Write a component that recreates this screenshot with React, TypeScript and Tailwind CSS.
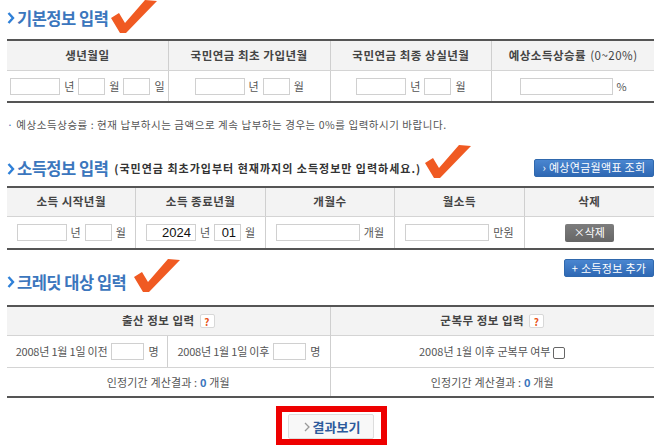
import React from "react";

const Field: React.FC<{ w: string; value?: string }> = ({ w, value }) => (
  <input
    readOnly
    value={value ?? ""}
    className={`${w} h-[17px] border border-[#d0d0d0] bg-white px-1 text-right text-[13px] text-[#111] outline-none font-['Liberation_Sans',sans-serif]`}
  />
);

const Check: React.FC<{ className: string }> = ({ className }) => (
  <svg className={`absolute ${className}`} width="47" height="34" viewBox="0 0 47 34">
    <path d="M0 18 L8 13 L14 23 L34 0 L46 1 L15 33 L9 33 Z" fill="#f05a22" />
  </svg>
);

const Title: React.FC<{ children: React.ReactNode }> = ({ children }) => (
  <div className="flex items-center gap-[2px] text-[16.5px] font-bold leading-none tracking-[-0.5px] text-[#3b76bd]">
    <svg width="8" height="12" viewBox="0 0 8 12">
      <path d="M1.5 1 L6 6 L1.5 11" fill="none" stroke="#2f80d8" strokeWidth="2.4" />
    </svg>
    {children}
  </div>
);

const Th: React.FC<{ children: React.ReactNode; last?: boolean }> = ({ children, last }) => (
  <div className={`flex items-center justify-center bg-[#f3f3f3] text-[11.5px] font-bold tracking-[0.5px] text-[#444] ${last ? "" : "border-r border-[#cfcfcf]"}`}>
    {children}
  </div>
);

const Td: React.FC<{ children: React.ReactNode; last?: boolean }> = ({ children, last }) => (
  <div className={`flex items-center justify-center gap-[4px] text-[11px] text-[#555] ${last ? "" : "border-r border-[#cfcfcf]"}`}>
    {children}
  </div>
);

const BlueButton: React.FC<{ children: React.ReactNode; w: string }> = ({ children, w }) => (
  <div className={`${w} flex h-[18px] items-center justify-center rounded-[2px] border border-[#2f68ad] bg-linear-to-b from-[#4a86d0] to-[#2e68b4] text-[11px] tracking-[0.3px] text-white`}>
    {children}
  </div>
);

const Help = () => (
  <span className="ml-[5px] flex h-[14px] w-[15px] items-center justify-center rounded-[2px] border border-[#d8d8d8] bg-white text-[10px] font-bold text-[#e8541a]">
    ?
  </span>
);

const Result = () => (
  <div className="flex h-[28px] items-center justify-center text-[11px] tracking-[0.15px] text-[#555]">
    인정기간 계산결과 :&nbsp;<b className="text-[#3b76bd]">0</b>&nbsp;개월
  </div>
);

export default function App() {
  return (
    <div className="relative h-[448px] w-[663px] overflow-hidden bg-white pl-[7px] pr-[9px] font-['Noto_Sans_CJK_KR','Liberation_Sans',sans-serif]">
      <div className="flex h-[39px] items-center pb-[3px]">
        <Title>기본정보 입력</Title>
      </div>
      <Check className="left-[111px] top-0" />

      <div className="border-y-2 border-y-[#555]">
        <div className="grid h-[30px] grid-cols-4 border-b border-[#d4d4d4]">
          <Th>생년월일</Th>
          <Th>국민연금 최초 가입년월</Th>
          <Th>국민연금 최종 상실년월</Th>
          <Th last>
            예상소득상승률<span className="ml-1 font-normal">(0~20%)</span>
          </Th>
        </div>
        <div className="grid h-[30px] grid-cols-4">
          <Td><Field w="w-[50px]" />년<Field w="w-[27px]" />월<Field w="w-[27px]" />일</Td>
          <Td><Field w="w-[50px]" />년<Field w="w-[27px]" />월</Td>
          <Td><Field w="w-[50px]" />년<Field w="w-[27px]" />월</Td>
          <Td last><Field w="w-[93px]" />%</Td>
        </div>
      </div>

      <p className="mt-[14px] h-[16px] text-[10.5px] leading-[16px] tracking-[0.55px] text-[#555]">
        <span className="text-[#3b76bd]">·</span> 예상소득상승률 : 현재 납부하시는 금액으로 계속 납부하는 경우는 0%를 입력하시기 바랍니다.
      </p>

      <div className="mt-[20px] flex h-[29px] items-center justify-between">
        <div className="flex items-center gap-[6px] pt-[2px]">
          <Title>소득정보 입력</Title>
          <span className="text-[11px] font-bold tracking-[1px] text-[#333]">(국민연금 최초가입부터 현재까지의 소득정보만 입력하세요.)</span>
        </div>
        <BlueButton w="w-[120px]">› 예상연금월액표 조회</BlueButton>
      </div>
      <Check className="left-[425px] top-[145px]" />

      <div className="mt-[4px] border-y-2 border-y-[#555]">
        <div className="grid h-[29px] grid-cols-5 border-b border-[#d4d4d4]">
          <Th>소득 시작년월</Th>
          <Th>소득 종료년월</Th>
          <Th>개월수</Th>
          <Th>월소득</Th>
          <Th last>삭제</Th>
        </div>
        <div className="grid h-[31px] grid-cols-5">
          <Td><Field w="w-[50px]" />년<Field w="w-[27px]" />월</Td>
          <Td><Field w="w-[50px]" value="2024" />년<Field w="w-[27px]" value="01" />월</Td>
          <Td><Field w="w-[84px]" />개월</Td>
          <Td><Field w="w-[84px]" />만원</Td>
          <Td last>
            <span className="flex h-[18px] w-[49px] items-center justify-center rounded-[2px] bg-linear-to-b from-[#7d7d7d] to-[#666] text-white">×삭제</span>
          </Td>
        </div>
      </div>

      <div className="mt-[9px] flex h-[46px] items-start justify-between">
        <div className="pt-[15px]"><Title>크레딧 대상 입력</Title></div>
        <BlueButton w="w-[90px]">+ 소득정보 추가</BlueButton>
      </div>
      <Check className="left-[134px] top-[259px]" />

      <div className="grid grid-cols-2 border-y-2 border-y-[#555]">
        <div className="border-r border-[#cfcfcf]">
          <div className="flex h-[29px] items-center justify-center border-b border-[#d4d4d4] bg-[#f3f3f3] text-[11.5px] font-bold tracking-[0.5px] text-[#444]">
            출산 정보 입력<Help />
          </div>
          <div className="grid h-[32px] grid-cols-2 border-b border-[#d4d4d4]">
            <Td><span className="tracking-[-0.2px]">2008년 1월 1일 이전</span><Field w="w-[33px]" />명</Td>
            <Td last><span className="tracking-[-0.2px]">2008년 1월 1일 이후</span><Field w="w-[33px]" />명</Td>
          </div>
          <Result />
        </div>
        <div>
          <div className="flex h-[29px] items-center justify-center border-b border-[#d4d4d4] bg-[#f3f3f3] text-[11.5px] font-bold tracking-[0.5px] text-[#444]">
            군복무 정보 입력<Help />
          </div>
          <div className="flex h-[32px] items-center justify-center gap-[3px] border-b border-[#d4d4d4] text-[11px] text-[#555]">
            2008년 1월 이후 군복무 여부
            <span className="mt-[3px] h-[12px] w-[12px] rounded-[2px] border border-[#666] bg-white" />
          </div>
          <Result />
        </div>
      </div>

      <div className="mt-[8px] flex justify-center">
        <div className="ml-[2px] h-[39px] w-[111px] border-[6px] border-[#ee0000] px-[6px] pt-[2px]">
          <div className="flex h-[25px] w-[86px] items-center justify-center gap-[3px] rounded-[2px] border border-[#ddd] bg-[#f8f8f8] pl-[2px] text-[13px] font-bold text-[#2d5a9c]">
            <svg width="6" height="10" viewBox="0 0 6 10">
              <path d="M1 1 L5 5 L1 9" fill="none" stroke="#999" strokeWidth="1.3" />
            </svg>
            결과보기
          </div>
        </div>
      </div>
    </div>
  );
}
